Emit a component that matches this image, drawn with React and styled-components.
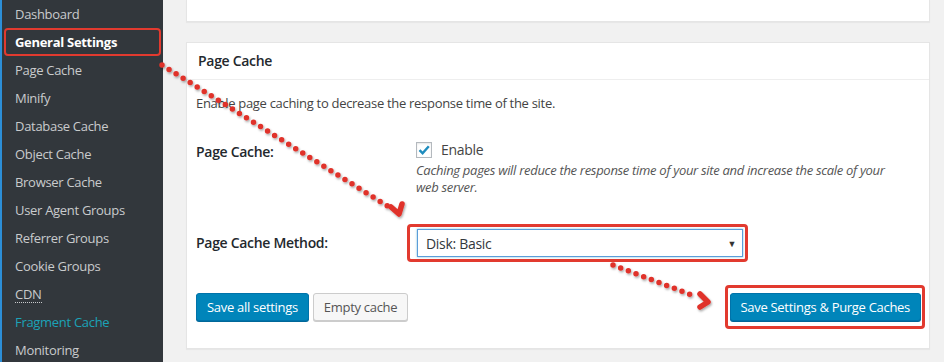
import styled, { createGlobalStyle } from "styled-components"

const GlobalStyle = createGlobalStyle`
  html, body {
    margin: 0;
    padding: 0;
    background: #f1f1f1;
  }
  body {
    font-family: "Open Sans", "Noto Sans", sans-serif;
    font-size: 13px;
    letter-spacing: -0.3px;
    color: #444;
  }
`

const menu = [
  "Dashboard",
  "General Settings",
  "Page Cache",
  "Minify",
  "Database Cache",
  "Object Cache",
  "Browser Cache",
  "User Agent Groups",
  "Referrer Groups",
  "Cookie Groups",
  "CDN",
  "Fragment Cache",
  "Monitoring",
]

const App = () => {
  return (
    <Page>
      <GlobalStyle />
      <Sidebar>
        {menu.map((item) => (
          <MenuItem
            key={item}
            $active={item === "General Settings"}
            $accent={item === "Fragment Cache"}
          >
            {item === "CDN" ? <Abbr>CDN</Abbr> : item}
          </MenuItem>
        ))}
      </Sidebar>
      <Main>
        <TopCard />
        <Card>
          <CardHeader>Page Cache</CardHeader>
          <CardBody>
            <Intro>Enable page caching to decrease the response time of the site.</Intro>
            <FormRow $top={29}>
              <Label>Page Cache:</Label>
              <Field>
                <CheckLine>
                  <CheckBox>
                    <svg width="14" height="14" viewBox="0 0 14 14">
                      <path d="M2.5 7.2 L5.6 10.2 L11.8 3.2" fill="none" stroke="#1e8cbe" strokeWidth="2.4" />
                    </svg>
                  </CheckBox>
                  Enable
                </CheckLine>
                <Description>
                  Caching pages will reduce the response time of your site and increase the scale of your web server.
                </Description>
              </Field>
            </FormRow>
            <FormRow $top={28} $center>
              <Label>Page Cache Method:</Label>
              <SelectOutline>
                <Select>
                  <span>Disk: Basic</span>
                  <Caret>▼</Caret>
                </Select>
              </SelectOutline>
            </FormRow>
            <ButtonRow>
              <Buttons>
                <Button $primary>Save all settings</Button>
                <Button>Empty cache</Button>
              </Buttons>
              <ButtonOutline>
                <Button $primary>Save Settings &amp; Purge Caches</Button>
              </ButtonOutline>
            </ButtonRow>
          </CardBody>
        </Card>
      </Main>
      <Overlay width="944" height="362" viewBox="0 0 944 362">
        <defs>
          <filter id="sh" x="-20%" y="-20%" width="140%" height="140%">
            <feDropShadow dx="1" dy="1.5" stdDeviation="0.8" floodColor="#000" floodOpacity="0.35" />
          </filter>
        </defs>
        <g filter="url(#sh)" stroke="#e0332b" fill="none" strokeLinecap="round">
          <line x1="162" y1="65" x2="389" y2="207" strokeWidth="5.5" strokeDasharray="0 8.3" />
          <path d="M391 207 L399 214 L402 204" strokeWidth="5.5" strokeLinejoin="round" />
          <line x1="613" y1="265" x2="697" y2="297" strokeWidth="5.5" strokeDasharray="0 8.2" />
          <path d="M700 294 L708 302 L700 307" strokeWidth="5.5" strokeLinejoin="round" />
        </g>
      </Overlay>
    </Page>
  )
}

const Page = styled.div`
  position: relative;
  display: flex;
  width: 944px;
  height: 362px;
  overflow: hidden;
  background: #f1f1f1;
`

const Sidebar = styled.div`
  width: 161px;
  flex: none;
  background: #32373c;
  border-left: 2px solid #2c8fd8;
  display: flex;
  flex-direction: column;
`

const MenuItem = styled.div`
  height: 28px;
  margin: 0 2px;
  padding-left: ${(p) => (p.$active ? "9px" : "11px")};
  font-size: 13px;
  white-space: nowrap;
  color: ${(p) => (p.$active ? "#fff" : p.$accent ? "#1ba3b8" : "#c9cbcd")};
  font-weight: ${(p) => (p.$active ? 700 : 400)};
  border: ${(p) => (p.$active ? "2px solid #e23a2f" : "none")};
  border-radius: 4px;
  box-sizing: border-box;
  line-height: ${(p) => (p.$active ? "24px" : "28px")};
`

const Abbr = styled.span`
  border-bottom: 1px dotted #c9cbcd;
  line-height: 16px;
  display: inline-block;
`

const Main = styled.div`
  flex: 1;
  padding: 0 14px 0 23px;
  display: flex;
  flex-direction: column;
`

const TopCard = styled.div`
  height: 21px;
  background: #fff;
  border: 1px solid #e5e5e5;
  border-top: none;
  box-shadow: 0 1px 1px rgba(0, 0, 0, 0.04);
`

const Card = styled.div`
  margin-top: 20px;
  height: 305px;
  background: #fff;
  border: 1px solid #e5e5e5;
  box-shadow: 0 1px 1px rgba(0, 0, 0, 0.04);
  display: flex;
  flex-direction: column;
`

const CardHeader = styled.div`
  height: 36px;
  line-height: 36px;
  padding-left: 11px;
  border-bottom: 1px solid #eee;
  font-size: 14px;
  font-weight: 600;
  color: #23282d;
`

const CardBody = styled.div`
  padding: 13px 10px 0 9px;
  display: flex;
  flex-direction: column;
`

const Intro = styled.div`
  line-height: 20px;
  color: #444;
`

const FormRow = styled.div`
  display: flex;
  align-items: ${(p) => (p.$center ? "center" : "flex-start")};
  margin-top: ${(p) => p.$top}px;
`

const Label = styled.div`
  width: 211px;
  flex: none;
  font-size: 14px;
  font-weight: 600;
  color: #23282d;
  line-height: 20px;
`

const Field = styled.div`
  flex: 1;
  padding-left: 9px;
`

const CheckLine = styled.div`
  display: flex;
  align-items: center;
  gap: 9px;
  line-height: 20px;
  font-size: 14px;
  color: #444;
  margin-top: -2px;
`

const CheckBox = styled.span`
  width: 14px;
  height: 14px;
  border: 1px solid #b4b9be;
  background: #fff;
  box-shadow: inset 0 1px 2px rgba(0, 0, 0, 0.1);
  display: flex;
  align-items: center;
  justify-content: center;
`

const Description = styled.p`
  margin: 2px 0 0;
  font-style: italic;
  color: #555;
  line-height: 17px;
  max-width: 480px;
`

const SelectOutline = styled.div`
  padding: 2px 2px 2px 7px;
  border: 3px solid #e23a2f;
  border-radius: 4px;
`

const Select = styled.div`
  width: 310px;
  height: 26px;
  border: 1px solid #5b9dd9;
  box-shadow: 0 0 2px rgba(30, 140, 190, 0.6);
  display: flex;
  align-items: center;
  justify-content: space-between;
  padding: 0 6px 0 8px;
  box-sizing: content-box;
  font-size: 14px;
  color: #32373c;
`

const Caret = styled.span`
  font-size: 9px;
  color: #333;
`

const ButtonRow = styled.div`
  display: flex;
  justify-content: space-between;
  align-items: center;
  margin-top: 23px;
  margin-right: -6px;
`

const Buttons = styled.div`
  display: flex;
  gap: 4px;
`

const ButtonOutline = styled.div`
  padding: 5px 1px 5px 2px;
  border: 3px solid #e23a2f;
  border-radius: 4px;
`

const Button = styled.div`
  height: 26px;
  line-height: 26px;
  padding: 0 10px;
  font-size: 13px;
  border-radius: 3px;
  white-space: nowrap;
  border: 1px solid ${(p) => (p.$primary ? "#0073aa" : "#ccc")};
  background: ${(p) => (p.$primary ? "#0085ba" : "#f7f7f7")};
  color: ${(p) => (p.$primary ? "#fff" : "#555")};
  box-shadow: 0 1px 0 ${(p) => (p.$primary ? "#006799" : "#ccc")};
`

const Overlay = styled.svg`
  position: absolute;
  left: 0;
  top: 0;
  pointer-events: none;
`

export default App
